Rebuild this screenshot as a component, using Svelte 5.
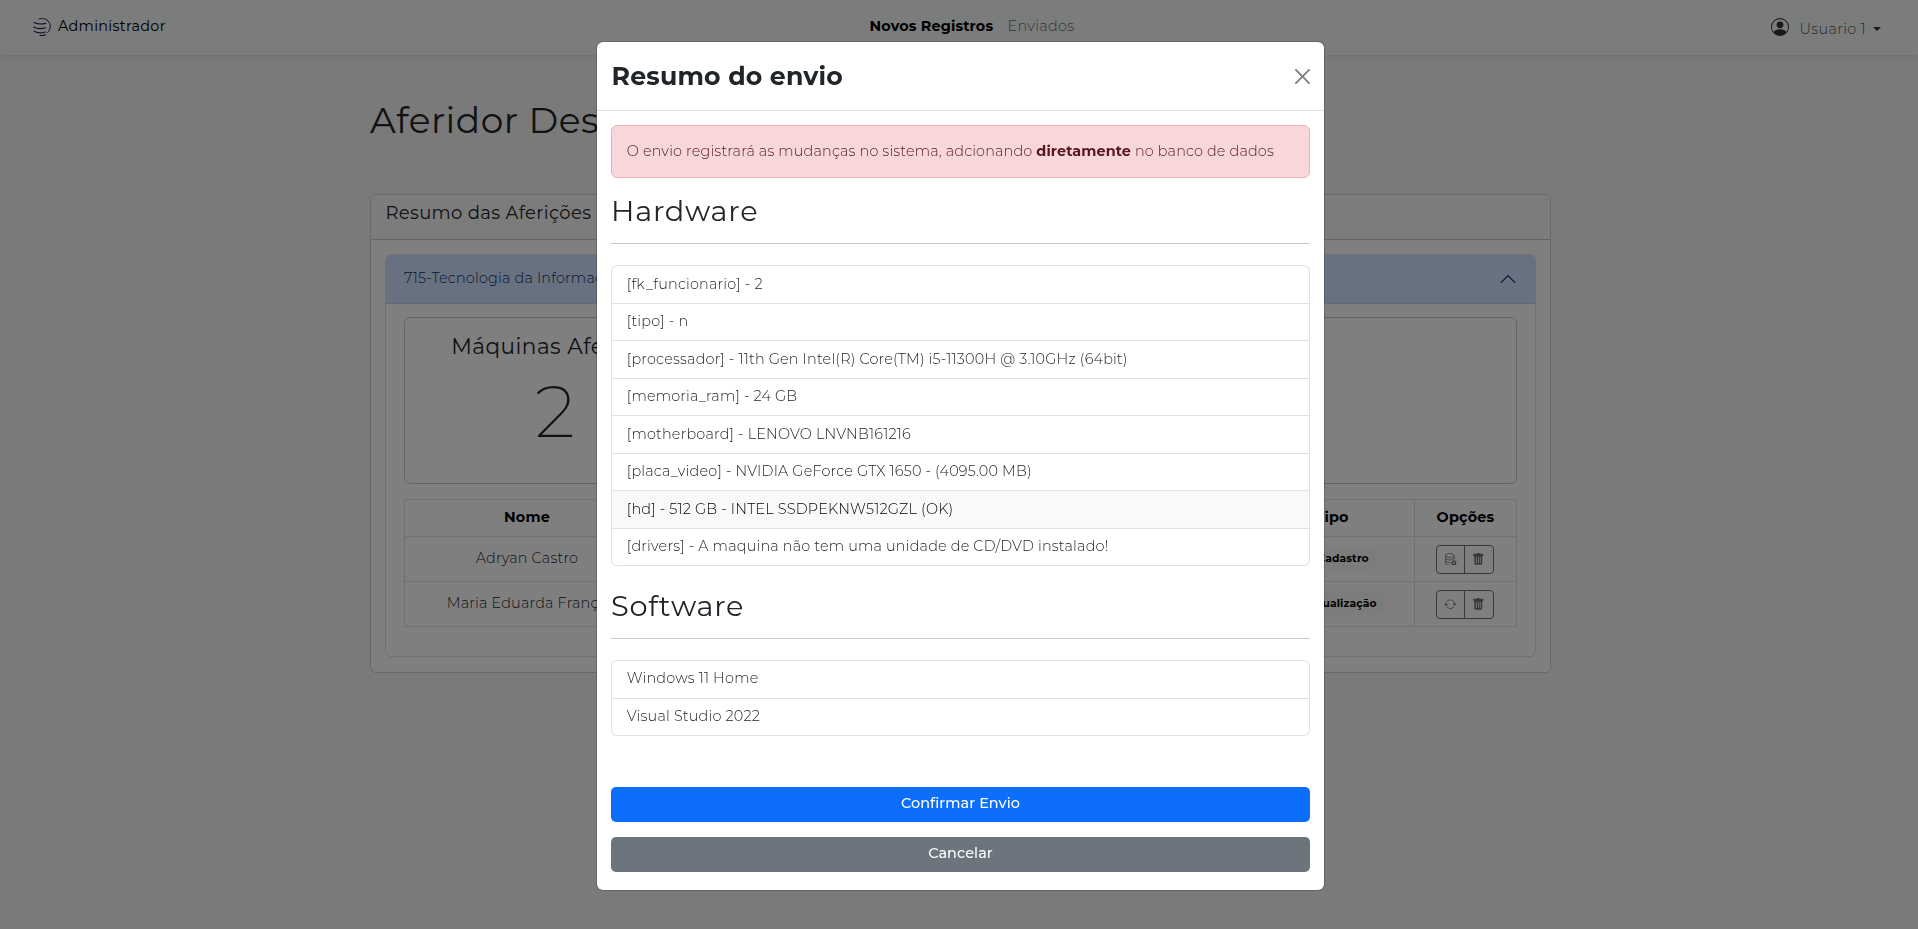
<script>
  const hardware = [
    { text: '[fk_funcionario] - 2' },
    { text: '[tipo] - n' },
    { text: '[processador] - 11th Gen Intel(R) Core(TM) i5-11300H @ 3.10GHz (64bit)' },
    { text: '[memoria_ram] - 24 GB' },
    { text: '[motherboard] - LENOVO LNVNB161216' },
    { text: '[placa_video] - NVIDIA GeForce GTX 1650 - (4095.00 MB)' },
    { text: '[hd] - 512 GB - INTEL SSDPEKNW512GZL (OK)', active: true },
    { text: '[drivers] - A maquina não tem uma unidade de CD/DVD instalado!' }
  ];
  const software = [{ text: 'Windows 11 Home' }, { text: 'Visual Studio 2022' }];
  const machines = [
    { name: 'Adryan Castro', type: 'Cadastro', sync: false },
    { name: 'Maria Eduarda França', type: 'Atualização', sync: true }
  ];
</script>

{#snippet list(items)}
  <ul class="list">
    {#each items as item}
      <li class:active={item.active}>{item.text}</li>
    {/each}
  </ul>
{/snippet}

<div class="page">
  <header>
    <div class="brand">
      <svg class="logo" viewBox="0 0 18 18" fill="none" stroke="#242058" stroke-linecap="round">
        <path d="M6 1C9 .1 12.500.3 15 3c3.300 3.500 2.800 8.700-.4 11.700" stroke-width="1" />
        <path d="M1 4.600c3.500 1.700 8 1.700 11.700.8M.6 9c3.600 2 8.200 1.900 12 .8M1.200 13.200c3 1.800 7.500 2 11.300.8M7 17.300c2 .4 4 .2 5.500-.5" stroke-width="1.100" />
      </svg>
      <span>Administrador</span>
    </div>
    <nav>
      <b>Novos Registros</b>
      <a href="#enviados">Enviados</a>
    </nav>
    <div class="user">
      <svg class="avatar" viewBox="0 0 16 16"><path d="M11 6a3 3 0 1 1-6 0 3 3 0 0 1 6 0z" /><path fill-rule="evenodd" d="M0 8a8 8 0 1 1 16 0A8 8 0 0 1 0 8zm8-7a7 7 0 0 0-5.468 11.370C3.242 11.226 4.805 10 8 10s4.757 1.225 5.468 2.370A7 7 0 0 0 8 1z" /></svg>
      <span>Usuario 1</span>
      <i class="caret"></i>
    </div>
  </header>

  <main>
    <h1>Aferidor Desktop</h1>
    <section class="card">
      <h4>Resumo das Aferições</h4>
      <div class="accordion">
        <div class="accordion-head">
          <span>715-Tecnologia da Informação</span>
          <svg class="chevron" viewBox="0 0 16 16" fill="#052c65"><path fill-rule="evenodd" d="M1.646 11.354a.5.5 0 0 0 .708 0L8 5.707l5.646 5.647a.5.5 0 0 0 .708-.708l-6-6a.5.5 0 0 0-.708 0l-6 6a.5.5 0 0 0 0 .708z" /></svg>
        </div>
        <div class="accordion-body">
          <div class="stats">
            <div class="stat">
              <h5>Máquinas Aferidas</h5>
              <div class="count">2</div>
            </div>
          </div>
          <div class="table">
            <div class="row head">
              <div>Nome</div>
              <div></div>
              <div>Tipo</div>
              <div>Opções</div>
            </div>
            {#each machines as m}
              <div class="row">
                <div>{m.name}</div>
                <div></div>
                <div><span class="badge">{m.type}</span></div>
                <div class="options">
                  <div class="buttons">
                    <button aria-label={m.sync ? 'Atualizar' : 'Cadastrar'}>
                      {#if m.sync}
                        <svg class="icon" viewBox="0 0 16 16" fill="currentColor"><path d="M11.534 7h3.932a.25.25 0 0 1 .192.410l-1.966 2.360a.25.25 0 0 1-.384 0l-1.966-2.360a.25.25 0 0 1 .192-.410zm-11 2h3.932a.25.25 0 0 0 .192-.410L2.692 6.230a.25.25 0 0 0-.384 0L.342 8.590A.25.25 0 0 0 .534 9z" /><path fill-rule="evenodd" d="M8 3c-1.552 0-2.940.707-3.857 1.818a.5.5 0 1 1-.771-.636A6.002 6.002 0 0 1 13.917 7H12.900A5.002 5.002 0 0 0 8 3zM3.100 9a5.002 5.002 0 0 0 8.757 2.182.5.5 0 1 1 .771.636A6.002 6.002 0 0 1 2.083 9H3.100z" /></svg>
                      {:else}
                        <svg class="icon" viewBox="0 0 16 16" fill="none" stroke="currentColor"><ellipse cx="7.500" cy="3.200" rx="5.500" ry="2.500" /><path d="M2 3v10c0 1.300 2.400 2.500 6 2.500M13 3v5M2 6.300c0 1.300 2.400 2.400 5.500 2.400S13 7.600 13 6.300M2 9.700c0 1.300 2.400 2.300 6 2.400" /><circle cx="12.500" cy="12.500" r="2.200" stroke-width="1.700" /><path d="M12.500 8.800v1.400M12.500 14.800v1.400M8.800 12.500h1.400M14.800 12.500h1.400M9.900 9.900l1 1M14.100 14.100l1 1M15.100 9.900l-1 1M10.900 14.100l-1 1" stroke-width=".9" /></svg>
                      {/if}
                    </button>
                    <button aria-label="Excluir">
                      <svg class="icon" viewBox="0 0 16 16" fill="currentColor"><path d="M2.500 1a1 1 0 0 0-1 1v1a1 1 0 0 0 1 1H3v9a2 2 0 0 0 2 2h6a2 2 0 0 0 2-2V4h.5a1 1 0 0 0 1-1V2a1 1 0 0 0-1-1H10a1 1 0 0 0-1-1H7a1 1 0 0 0-1 1H2.500zm3 4a.5.5 0 0 1 .5.5v7a.5.5 0 0 1-1 0v-7a.5.5 0 0 1 .5-.5zM8 5a.5.5 0 0 1 .5.5v7a.5.5 0 0 1-1 0v-7A.5.5 0 0 1 8 5zm3 .5v7a.5.5 0 0 1-1 0v-7a.5.5 0 0 1 1 0z" /></svg>
                    </button>
                  </div>
                </div>
              </div>
            {/each}
          </div>
        </div>
      </div>
    </section>
  </main>
</div>

<div class="backdrop">
  <div class="modal" role="dialog">
    <div class="modal-head">
      <h2>Resumo do envio</h2>
      <svg class="close" viewBox="0 0 16 16"><path d="M.293.293a1 1 0 0 1 1.414 0L8 6.586 14.293.293a1 1 0 1 1 1.414 1.414L9.414 8l6.293 6.293a1 1 0 0 1-1.414 1.414L8 9.414l-6.293 6.293a1 1 0 0 1-1.414-1.414L6.586 8 .293 1.707a1 1 0 0 1 0-1.414z" /></svg>
    </div>
    <div class="modal-body">
      <div class="alert">O envio registrará as mudanças no sistema, adcionando <b>diretamente</b> no banco de dados</div>
      <h3>Hardware</h3>
      <hr />
      {@render list(hardware)}
      <h3 class="second">Software</h3>
      <hr />
      {@render list(software)}
      <div class="actions">
        <button class="primary">Confirmar Envio</button>
        <button class="secondary">Cancelar</button>
      </div>
    </div>
  </div>
</div>

<style>
  :global(body) {
    background: #f5f5f5;
    overflow: hidden;
  }
  * { box-sizing: border-box; }
  .page, .backdrop {
    font: 350 14.400px/1.5 Montserrat, Inter, sans-serif;
    letter-spacing: .2px;
    color: #212529;
    white-space: nowrap;
  }
  h1, h2, h3, h4, h5, ul { margin: 0; padding: 0; font-weight: 400; line-height: 1.2; }
  button { font: inherit; padding: 0; }
  .page { height: 929px; }

  header {
    display: grid;
    grid-template-columns: 1fr auto 1fr;
    height: 55px;
    padding: 0 37px 0 33px;
    background: linear-gradient(#f6faf9, #f8f8f8);
    box-shadow: 0 2px 4px rgba(0, 0, 0, .075);
  }
  .brand { display: flex; gap: 7px; padding-top: 16px; font-weight: 400; letter-spacing: .3px; color: #000; }
  .logo { width: 18px; height: 18px; margin-top: 2px; }
  nav { display: flex; gap: 14.400px; padding-top: 16px; margin-left: 30px; }
  nav b { font-weight: 700; letter-spacing: .14px; color: #000; }
  nav a { color: #65686b; text-decoration: none; letter-spacing: .3px; }
  .user { display: flex; justify-content: flex-end; padding-top: 19px; color: #4d5154; letter-spacing: .35px; }
  .avatar { width: 18px; height: 18px; fill: #303336; margin: -1px 11px 0 0; }
  .caret { margin: 8px 0 0 7px; border: 4px solid transparent; border-top-color: #303336; border-bottom: 0; height: 0; }

  main { width: 1551px; padding: 44px 0 0 370px; }
  h1 { height: 95px; font-size: 36px; letter-spacing: .49px; }
  .card { height: 479px; border: 1px solid #d2d2d2; border-radius: 6px; background: #fff; }
  h4 { height: 45px; padding: 8px 14.400px; background: #f8f8f8; border-bottom: 1px solid #c8c8c8; font-size: 18px; letter-spacing: .36px; border-radius: 5px 5px 0 0; }
  .accordion { height: 403px; margin: 14px; border: 1px solid #dee2e6; border-radius: 6px; overflow: hidden; }
  .accordion-head { display: flex; align-items: center; justify-content: space-between; height: 49px; padding: 0 18px; background: #cfe2ff; color: #052c65; border-bottom: 1px solid #c5d2e2; }
  .accordion-head span { padding-bottom: 1px; }
  .chevron { width: 18px; height: 18px; }
  .accordion-body { padding: 13px 18px; }
  .stats { height: 167px; border: 1px solid #c8c8c8; border-radius: 6px; }
  .stat { width: 300px; padding-top: 16px; text-align: center; }
  h5 { font-size: 21.600px; letter-spacing: .46px; }
  .count { margin-top: 7.600px; font-size: 72px; font-weight: 200; line-height: 1.2; letter-spacing: 0; }
  .table { margin-top: 15px; border: solid #dee2e6; border-width: 1px 0 0 1px; }
  .row { display: grid; grid-template-columns: 245px 600px 165px 102px; height: 45px; }
  .row > div { display: flex; align-items: center; justify-content: center; padding-bottom: 1px; border: solid #dee2e6; border-width: 0 1px 1px 0; }
  .row > .options { padding: 0 2px 0 0; }
  .head { height: 37px; font-weight: 700; color: #000; }
  .badge { margin-left: 22px; padding: 0 7px; background: #f8f9fa; color: #000; border-radius: 6px; font-size: 10.800px; font-weight: 700; line-height: 23px; letter-spacing: .1px; }
  .buttons { display: flex; width: 58px; height: 29px; border: 1px solid #6c757d; border-radius: 4px; color: #6c757d; }
  .buttons button { display: grid; place-items: center; flex: 1; border: 0; background: none; color: inherit; }
  .buttons button + button { border-left: 1px solid #6c757d; }
  .icon { width: 12.600px; height: 12.600px; }

  .backdrop { position: fixed; inset: 0; padding: 41px 0 0 596px; background: rgba(0, 0, 0, .5); }
  .modal { width: 729px; height: 850px; background: #fff; background-clip: padding-box; border: 1px solid rgba(0, 0, 0, .175); border-radius: 7px; }
  .modal-head { display: flex; align-items: center; justify-content: space-between; height: 69px; padding: 0 14px; border-bottom: 1px solid #dee2e6; }
  h2 { padding-left: .5px; font-size: 25.200px; font-weight: 700; letter-spacing: .2px; }
  .close { width: 15px; height: 15px; opacity: .5; }
  .modal-body { padding: 14px; }
  .alert { height: 53px; padding: 15px 14.800px; border: 1px solid #f1aeb5; border-radius: 6px; background: #f8d7da; color: #58151c; letter-spacing: .17px; }
  .alert b { font-weight: 700; letter-spacing: .1px; }
  h3 { margin-top: 16px; font-size: 28.800px; letter-spacing: .75px; }
  .second { margin-top: 22.600px; }
  hr { height: 1px; margin: 14.400px 0 21.400px; border: 0; background: #c7c8c9; }
  .list { list-style: none; border: 1px solid #dee2e6; border-top: 0; border-radius: 6px; overflow: hidden; font-weight: 350; line-height: 1.5; }
  li { height: 37.500px; padding: 7.200px 14.800px; border-top: 1px solid #dee2e6; }
  li:first-child { border-radius: 6px 6px 0 0; }
  .active { background: #f8f9fa; color: #000; }
  .actions { display: grid; gap: 15px; margin-top: 50.700px; }
  .actions button { height: 35px; padding-bottom: 1px; border: 0; border-radius: 5px; color: #fff; font-weight: 500; letter-spacing: .08px; }
  .primary { background: #0d6efd; }
  .secondary { background: #6c757d; }
</style>
